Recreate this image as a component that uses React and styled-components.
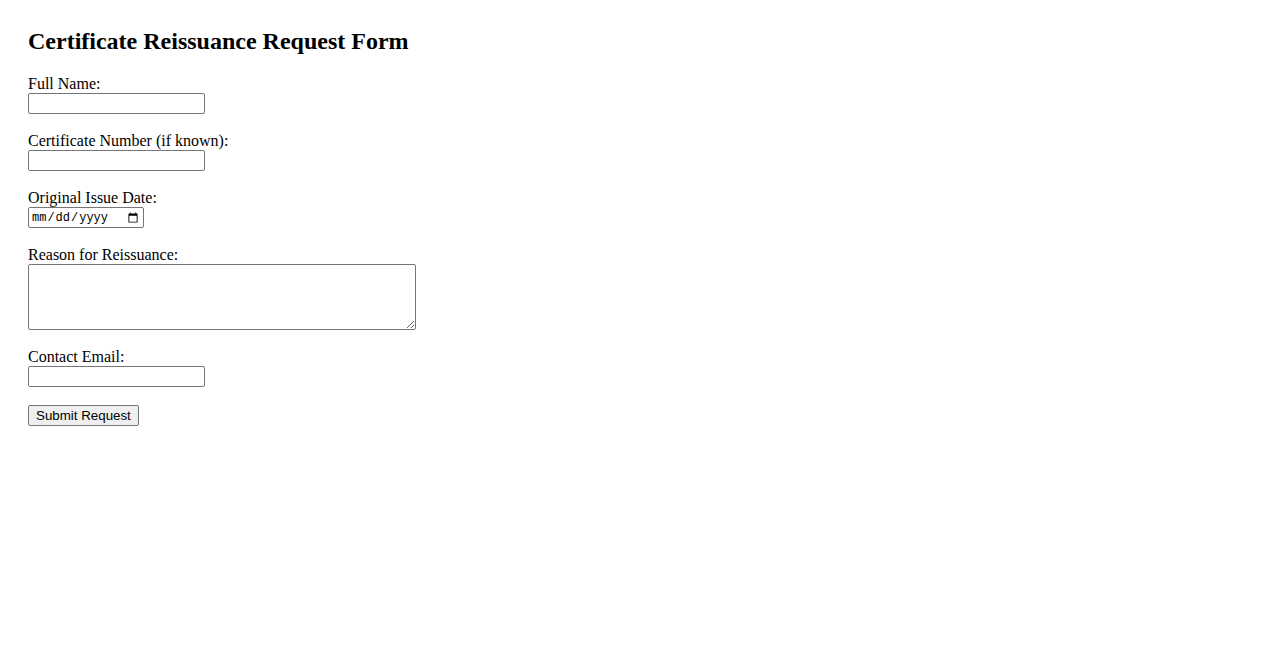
import React from "react";
import styled, { createGlobalStyle } from "styled-components";

const GlobalStyle = createGlobalStyle`
  body {
    margin: 0;
    background: #ffffff;
    color: #000000;
    font-family: "Liberation Serif", "Times New Roman", serif;
    font-size: 16px;
  }
`;

const Page = styled.div`
  padding: 27px 28px 28px;
`;

const Title = styled.h2`
  margin: 0 0 20px;
  font-size: 24px;
  font-weight: bold;
  line-height: 28px;
`;

const Form = styled.form`
  display: flex;
  flex-direction: column;
  align-items: flex-start;
`;

const Field = styled.div`
  display: flex;
  flex-direction: column;
  align-items: flex-start;
  margin-bottom: 18px;
`;

const Label = styled.label`
  display: block;
  line-height: 18px;
  height: 18px;
`;

const controlBase = `
  box-sizing: border-box;
  margin: 0;
  border: 1px solid #767676;
  border-radius: 2px;
  background: #ffffff;
  color: #000000;
  font-family: "Liberation Sans", Arial, sans-serif;
  font-size: 13.33px;
`;

const Input = styled.input`
  ${controlBase}
  width: ${(p) => (p.type === "date" ? "116px" : "177px")};
  height: 21px;
  padding: 1px 2px;
  ${(p) =>
    p.type === "date" &&
    `font-family: "Liberation Mono", "DejaVu Sans Mono", monospace; font-size: 12px;`}
`;

const TextArea = styled.textarea`
  ${controlBase}
  width: 388px;
  height: 66px;
  padding: 2px;
  resize: both;
`;

const Button = styled.button`
  box-sizing: border-box;
  height: 21px;
  padding: 1px 7px;
  border: 1px solid #767676;
  border-radius: 2px;
  background: #efefef;
  color: #000000;
  font-family: "Liberation Sans", Arial, sans-serif;
  font-size: 13.33px;
`;

const fields = [
  { id: "fullName", label: "Full Name:", type: "text" },
  { id: "certNumber", label: "Certificate Number (if known):", type: "text" },
  { id: "issueDate", label: "Original Issue Date:", type: "date" },
  { id: "reason", label: "Reason for Reissuance:", type: "textarea" },
  { id: "email", label: "Contact Email:", type: "email" },
];

export default function App() {
  return (
    <>
      <GlobalStyle />
      <Page>
        <Title>Certificate Reissuance Request Form</Title>
        <Form onSubmit={(e) => e.preventDefault()}>
          {fields.map((f) => (
            <Field key={f.id}>
              <Label htmlFor={f.id}>{f.label}</Label>
              {f.type === "textarea" ? (
                <TextArea id={f.id} rows={4} />
              ) : (
                <Input id={f.id} type={f.type} />
              )}
            </Field>
          ))}
          <Button type="submit">Submit Request</Button>
        </Form>
      </Page>
    </>
  );
}
